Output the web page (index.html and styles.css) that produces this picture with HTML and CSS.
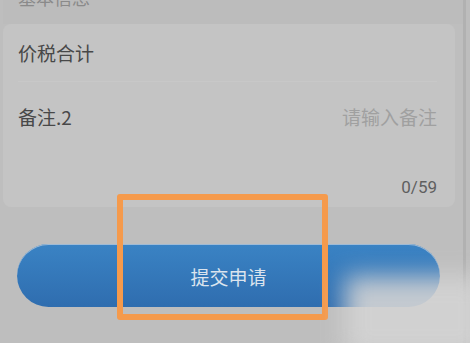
FILE: index.html
```html
<!DOCTYPE html>
<html lang="zh-CN">
<head>
  <meta charset="UTF-8" />
  <meta name="viewport" content="width=device-width, initial-scale=1.0" />
  <title>提交申请</title>
  <link rel="stylesheet" href="styles.css">
</head>
<body>
  <div class="page">
    <div class="section-head"><span>基本信息</span></div>

    <div class="card">
      <div class="row">
        <span class="label">价税合计</span>
      </div>
      <div class="row remark">
        <span class="label">备注.2</span>
        <span class="placeholder">请输入备注</span>
      </div>
      <div class="counter">0/59</div>
    </div>

    <div class="actions">
      <button class="submit" type="button">提交申请</button>
    </div>

    <div class="highlight"></div>
    <div class="watermark"></div>
  </div>
</body>
</html>
```

FILE: styles.css
```css
/* Reset */
*, *::before, *::after {
  margin: 0;
  padding: 0;
  box-sizing: border-box;
}

html, body {
  width: 100%;
  height: 100%;
  overflow: hidden;
  background: #bdbdbd;
  font-family: "Noto Sans CJK SC", "Noto Sans", sans-serif;
}

.page {
  position: relative;
  width: 466px;
  height: 343px;
  padding-left: 3px;
  border-right: 3px solid #b1b1b1;
  background: #bebebe;
}

.section-head {
  height: 24px;
  overflow: hidden;
  background: #bcbcbc;
}

.section-head span {
  display: block;
  margin-top: -13px;
  padding-left: 15px;
  font-size: 18px;
  line-height: 20px;
  color: #8a8a8a;
}

.card {
  width: 452px;
  background: #c4c4c4;
  border-radius: 8px;
  padding: 0 18px 0 15px;
}

.row {
  display: flex;
  align-items: center;
  justify-content: space-between;
  height: 58px;
  border-bottom: 1px solid #c8c8c8;
}

.row.remark {
  height: 68px;
  border-bottom: none;
}

.label {
  font-size: 19px;
  color: #484848;
}

.placeholder {
  font-size: 19px;
  color: #a0a0a0;
}

.counter {
  padding: 26px 0 9px;
  text-align: right;
  font-family: "Roboto", sans-serif;
  font-size: 17px;
  line-height: 22px;
  color: #5f5f5f;
}

.actions {
  padding: 37px 0 0 14px;
}

.submit {
  display: block;
  width: 423px;
  height: 63px;
  border: none;
  border-radius: 32px;
  background: linear-gradient(180deg, #3a83c4, #2f6daf);
  box-shadow: 0 1px 0 #9fbbd6 inset;
  color: #dbe4ee;
  font-family: inherit;
  font-size: 19px;
  padding-top: 2px;
}

/* orange annotation box drawn over the button */
.highlight {
  position: absolute;
  left: 117px;
  top: 194px;
  width: 211px;
  height: 126px;
  border: 6px solid #f59a4c;
  border-radius: 3px;
}

/* blurred watermark in the corner */
.watermark {
  position: absolute;
  left: 345px;
  top: 276px;
  width: 140px;
  height: 80px;
  background: #d4d4d4;
  opacity: 0.9;
  filter: blur(12px);
}
```
